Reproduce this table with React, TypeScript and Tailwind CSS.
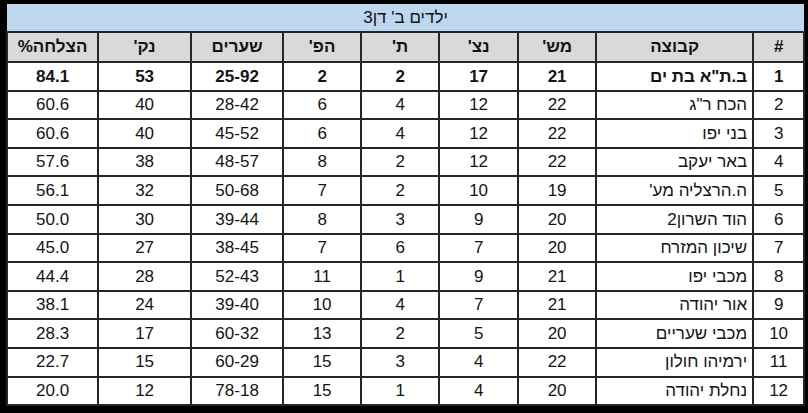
const headers = ["#", "קבוצה", "מש'", "נצ'", "ת'", "הפ'", "שערים", "נק'", "הצלחה%"];
const widths = [51, 157, 78, 79, 78, 78, 92, 93, 91];

const rows: (string | number)[][] = [
  [1, 'ב.ת"א בת ים', 21, 17, 2, 2, "25-92", 53, "84.1"],
  [2, 'הכח ר"ג', 22, 12, 4, 6, "28-42", 40, "60.6"],
  [3, "בני יפו", 22, 12, 4, 6, "45-52", 40, "60.6"],
  [4, "באר יעקב", 22, 12, 2, 8, "48-57", 38, "57.6"],
  [5, "ה.הרצליה מע'", 19, 10, 2, 7, "50-68", 32, "56.1"],
  [6, "הוד השרון2", 20, 9, 3, 8, "39-44", 30, "50.0"],
  [7, "שיכון המזרח", 20, 7, 6, 7, "38-45", 27, "45.0"],
  [8, "מכבי יפו", 21, 9, 1, 11, "52-43", 28, "44.4"],
  [9, "אור יהודה", 21, 7, 4, 10, "39-40", 24, "38.1"],
  [10, "מכבי שעריים", 20, 5, 2, 13, "60-32", 17, "28.3"],
  [11, "ירמיהו חולון", 22, 4, 3, 15, "60-29", 15, "22.7"],
  [12, "נחלת יהודה", 20, 4, 1, 15, "78-18", 12, "20.0"],
];

export default function App() {
  return (
    <div
      className="w-[808px] h-[413px] bg-black pt-[4px] pl-[6px] pr-[5px] overflow-hidden"
      style={{ fontFamily: '"Liberation Sans", Arial, sans-serif' }}
    >
      <table dir="rtl" className="w-[797px] table-fixed border-collapse text-[17px] text-[#141414]">
        <colgroup>
          {widths.map((w, i) => (
            <col key={i} style={{ width: w }} />
          ))}
        </colgroup>
        <tbody>
          {/* Title */}
          <tr className="h-[28px] bg-[#bdd7ee]">
            <td colSpan={9} className="text-center align-middle p-0 border-b-2 border-[#262626]">
              ילדים ב' דן3
            </td>
          </tr>
          {/* Header */}
          <tr className="h-[30px] bg-[#d9d9d9] font-bold">
            {headers.map((h, i) => (
              <td
                key={i}
                className="border-2 border-[#262626] text-center align-middle p-0"
              >
                {h}
              </td>
            ))}
          </tr>
          {rows.map((r, ri) => (
            <tr key={ri} className={`h-[28.6px] bg-white ${ri === 0 ? "font-bold" : ""}`}>
              {r.map((c, ci) => (
                <td
                  key={ci}
                  className={`border-2 border-[#262626] align-middle p-0 ${
                    ci === 1 ? "text-right pr-[5px]" : "text-center"
                  }`}
                >
                  {c}
                </td>
              ))}
            </tr>
          ))}
        </tbody>
      </table>
    </div>
  );
}
